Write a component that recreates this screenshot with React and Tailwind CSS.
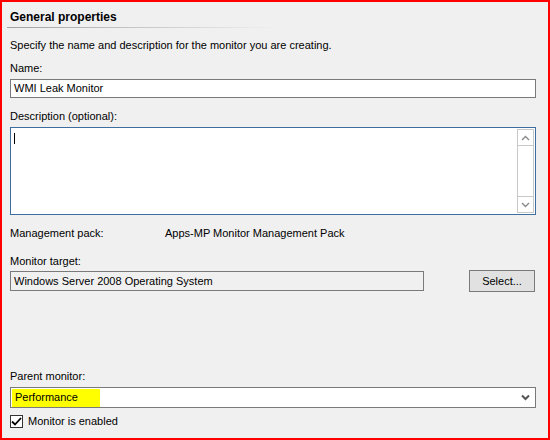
import React from 'react';

const font = { fontFamily: '"Liberation Sans", Arial, sans-serif' };

const Label = ({ children, className = '' }) => (
  <div className={`h-[16px] text-[11px] leading-[16px] text-black ${className}`}>{children}</div>
);

const Chevron = ({ up, className = '' }) => (
  <svg width="9" height="6" viewBox="0 0 9 6" className={className}>
    <path
      d={up ? 'M1 5 L4.5 1.5 L8 5' : 'M1 1 L4.5 4.5 L8 1'}
      fill="none"
      stroke="currentColor"
      strokeWidth="1.4"
    />
  </svg>
);

export default function App() {
  return (
    <div
      style={font}
      className="w-[550px] h-[440px] border-2 border-[#ff0000] bg-[#f0f0f0] pl-2 pr-[12px] pt-[7px] overflow-hidden"
    >
      {/* header */}
      <div className="h-[16px] text-[12px] leading-[16px] font-bold text-black">General properties</div>
      <div className="mt-[2px] ml-[-3px] h-px w-[270px] bg-gradient-to-r from-[#a0a0a0] via-[#c8c8c8] to-transparent" />

      <Label className="mt-[9px]">Specify the name and description for the monitor you are creating.</Label>

      <Label className="mt-[7px]">Name:</Label>
      <div className="mt-[3px] h-[19px] w-[526px] border border-[#7a7a7a] bg-white flex items-center px-[3px] text-[11px] text-black">
        WMI Leak Monitor
      </div>

      <Label className="mt-[10px]">Description (optional):</Label>
      <div className="mt-[3px] h-[88px] w-[526px] border border-[#3c6e9f] bg-white flex p-px">
        <div className="flex-1 pl-[2px] pt-[4px]">
          <div className="h-[11px] w-px bg-black" />
        </div>
        <div className="w-[17px] border border-[#c8c8c8] flex flex-col justify-between">
          <div className="h-[16px] border-b border-[#c8c8c8] flex items-center justify-center text-[#8a8a8a]">
            <Chevron up />
          </div>
          <div className="h-[16px] border-t border-[#c8c8c8] flex items-center justify-center text-[#8a8a8a]">
            <Chevron />
          </div>
        </div>
      </div>

      <div className="mt-[10px] flex">
        <Label className="w-[155px]">Management pack:</Label>
        <Label>Apps-MP Monitor Management Pack</Label>
      </div>

      <Label className="mt-[12px]">Monitor target:</Label>
      <div className="mt-[1px] h-[22px] w-[525px] flex items-center justify-between">
        <div className="h-[20px] w-[414px] border border-[#7a7a7a] flex items-center px-[3px] text-[11px] text-black">
          Windows Server 2008 Operating System
        </div>
        <div className="h-[22px] w-[66px] border border-[#7a7a7a] bg-[#e1e1e1] flex items-center justify-center text-[11px] text-black">
          Select...
        </div>
      </div>

      <Label className="mt-[76px]">Parent monitor:</Label>
      <div className="mt-[3px] h-[21px] w-[526px] border border-[#7a7a7a] bg-white flex items-center pl-px pr-[5px]">
        <div className="h-[18px] w-[88px] bg-[#ffff00] flex items-center pl-[3px] text-[11px] text-black">
          Performance
        </div>
        <div className="flex-1" />
        <svg width="9" height="7" viewBox="0 0 9 7" className="text-[#555]">
          <path d="M1 1.5 L4.5 5 L8 1.5" fill="none" stroke="currentColor" strokeWidth="2" />
        </svg>
      </div>

      <div className="mt-[5px] h-[16px] flex items-center">
        <div className="h-[13px] w-[13px] border border-[#333] bg-white flex items-center justify-center">
          <svg width="11" height="9" viewBox="0 0 11 9">
            <path d="M1 4.5 L4 7.5 L10 1" fill="none" stroke="#000" strokeWidth="1.8" />
          </svg>
        </div>
        <span className="ml-[5px] text-[11px] leading-[16px] text-black">Monitor is enabled</span>
      </div>
    </div>
  );
}
